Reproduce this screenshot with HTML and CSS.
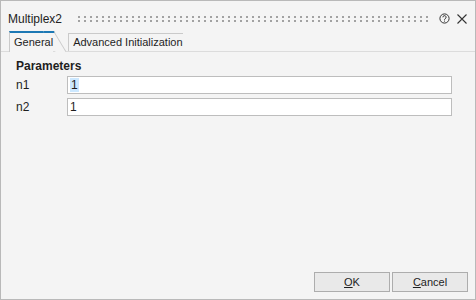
FILE: index.html
```html
<!DOCTYPE html>
<html lang="en">
<head>
  <meta charset="UTF-8" />
  <title>Multiplex2</title>
  <link rel="stylesheet" href="styles.css">
</head>
<body>
  <div class="window">
    <div class="titlebar">
      <span class="title">Multiplex2</span>
      <div class="gripper"></div>
      <svg class="help" width="11" height="11" viewBox="0 0 11 11">
        <circle cx="5.5" cy="5.5" r="4.6" fill="none" stroke="#333" stroke-width="1"/>
        <path d="M3.9 4.3a1.6 1.6 0 1 1 2.3 1.4c-.5.3-.7.5-.7 1.1" fill="none" stroke="#333" stroke-width="1"/>
        <rect x="5" y="7.6" width="1" height="1" fill="#333"/>
      </svg>
      <svg class="close" width="10" height="10" viewBox="0 0 10 10">
        <path d="M0.5 0.5L9.5 9.5M9.5 0.5L0.5 9.5" stroke="#333" stroke-width="1.1"/>
      </svg>
    </div>

    <div class="tabs">
      <div class="tab active">General</div>
      <div class="tab">Advanced Initialization</div>
    </div>

    <div class="content">
      <div class="section-title">Parameters</div>
      <div class="params">
        <label>n1</label>
        <div class="field"><span class="sel">1</span></div>
        <label>n2</label>
        <div class="field">1</div>
      </div>
    </div>

    <div class="footer">
      <button class="btn"><u>O</u>K</button>
      <button class="btn"><u>C</u>ancel</button>
    </div>
  </div>
</body>
</html>
```

FILE: styles.css
```css
body {
  margin: 0;
  padding: 0;
  background: #f4f4f4;
}

.window {
  width: 476px;
  height: 300px;
  box-sizing: border-box;
  border: 1px solid #b9b9b9;
  background: #f4f4f4;
  display: flex;
  flex-direction: column;
  font-family: "Liberation Sans", Arial, sans-serif;
  font-size: 11px;
  color: #1e1e1e;
}

.titlebar {
  height: 30px;
  box-sizing: border-box;
  display: flex;
  align-items: flex-start;
  padding: 11px 8px 0 7px;
}

.title {
  font-size: 12px;
  line-height: 14px;
  color: #222;
}

.gripper {
  flex: 1;
  height: 6px;
  margin: 4px 0 0 16px;
  background-image:
    linear-gradient(to right, transparent 2px, #f4f4f4 2px),
    linear-gradient(to bottom, #a2a2a2 2px, transparent 2px);
  background-size: 6px 4px;
}

.help {
  margin: 1px 0 0 9px;
}

.close {
  margin: 2px 0 0 7px;
}

.tabs {
  height: 20px;
  display: flex;
  align-items: flex-end;
  padding-left: 8px;
  border-bottom: 1px solid #dcdcdc;
}

.tab {
  position: relative;
  height: 17px;
  line-height: 17px;
  padding: 0 0 0 4px;
  border-left: 1px solid #cacaca;
  border-top: 1px solid #cacaca;
  background: #f4f4f4;
  margin-right: 17px;
}

.tab::after {
  content: '';
  position: absolute;
  top: -1px;
  bottom: 0;
  left: calc(100% - 10px);
  width: 10px;
  background: #f4f4f4;
  border-top: inherit;
  border-right: 1px solid #cacaca;
  transform: skewX(31deg);
  transform-origin: 0 0;
  z-index: -1;
}

.tab.active {
  height: 19px;
  line-height: 19px;
  border-top: 2px solid #1c78b4;
  margin-bottom: -1px;
  margin-right: 15px;
  z-index: 2;
}

.tab.active::after {
  top: -2px;
}

.content {
  padding: 6px 23px 0 15px;
}

.section-title {
  font-size: 12px;
  font-weight: bold;
  height: 16px;
  line-height: 16px;
}

.params {
  margin-top: 2px;
  display: grid;
  grid-template-columns: 51px 1fr;
  row-gap: 4px;
  align-items: center;
}

.params label {
  font-size: 12px;
}

.field {
  height: 18px;
  box-sizing: border-box;
  border: 1px solid #bdbdbd;
  background: #fff;
  padding-left: 2px;
  line-height: 16px;
  font-size: 12px;
}

.sel {
  background: #cce8ff;
  padding: 0 1px;
}

.footer {
  margin-top: auto;
  display: flex;
  justify-content: flex-end;
  gap: 2px;
  padding: 0 7px 7px 0;
}

.btn {
  width: 76px;
  height: 20px;
  box-sizing: border-box;
  border: 1px solid #adadad;
  background: #e9e9e9;
  font-family: inherit;
  font-size: 11px;
  color: #1e1e1e;
  padding: 0;
}
```
